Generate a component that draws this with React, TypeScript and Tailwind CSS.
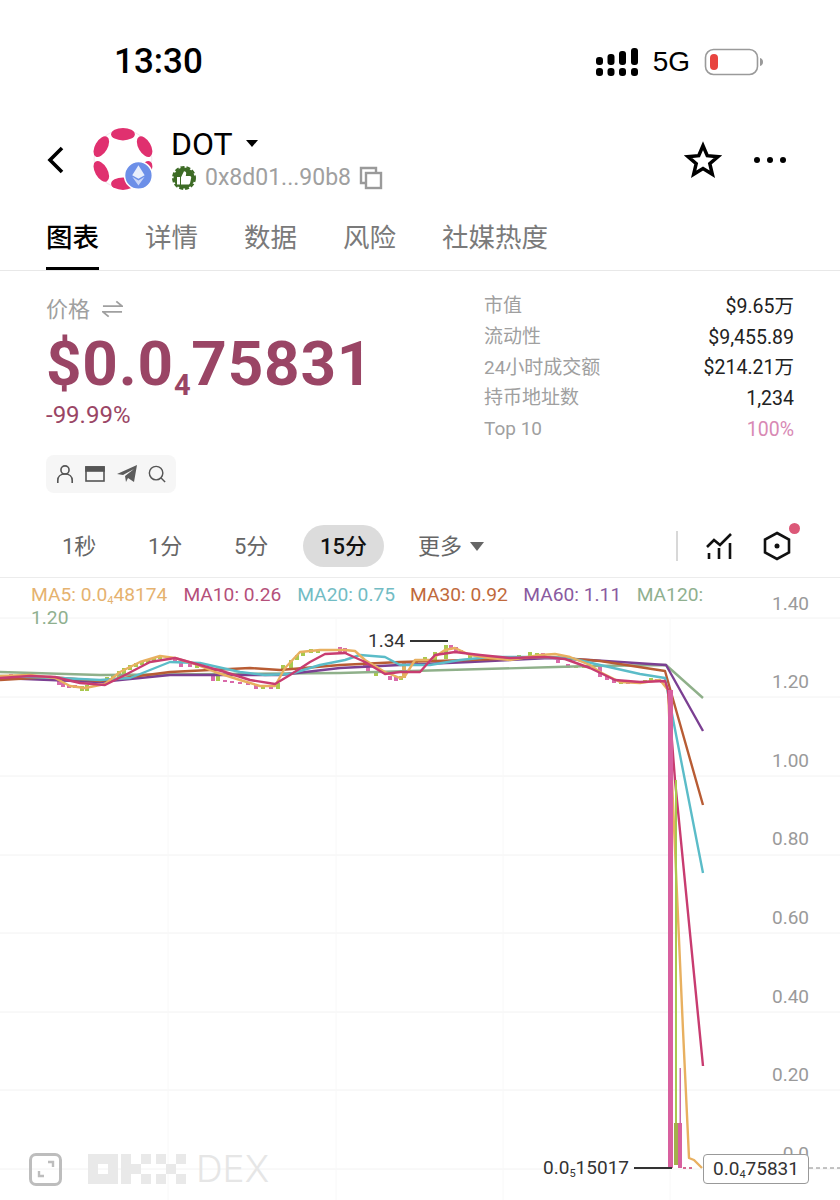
const cjk = "font-['Roboto','Noto_Sans_CJK_SC',sans-serif]";

const tabs = ["详情", "数据", "风险", "社媒热度"];

const stats = [
  { label: "市值", value: "$9.65万" },
  { label: "流动性", value: "$9,455.89" },
  { label: "24小时成交额", value: "$214.21万" },
  { label: "持币地址数", value: "1,234" },
  { label: "Top 10", value: "100%", pink: true },
];

const axis = [
  { label: "1.40", top: "top-[13px]" },
  { label: "1.20", top: "top-[91px]" },
  { label: "1.00", top: "top-[170px]" },
  { label: "0.80", top: "top-[248px]" },
  { label: "0.60", top: "top-[327px]" },
  { label: "0.40", top: "top-[406px]" },
  { label: "0.20", top: "top-[484px]" },
  { label: "0.0", top: "top-[563px]" },
];

const GREEN = "#a9c94f";
const PINK = "#d96aaa";

// x, y, height, colour
const candles: [number, number, number, string][] = [
  [3, 675, 4, PINK], [11, 674, 3, PINK], [59, 678, 7, PINK], [63, 681, 6, PINK], [69, 685, 3, PINK],
  [75, 685, 3, PINK], [82, 686, 5, GREEN], [87, 685, 6, GREEN], [107, 677, 6, GREEN], [113, 675, 6, GREEN],
  [119, 671, 7, GREEN], [124, 668, 7, GREEN], [130, 665, 5, GREEN], [136, 663, 4, GREEN], [142, 662, 3, GREEN],
  [148, 660, 3, GREEN], [154, 658, 3, GREEN], [160, 656, 3, GREEN], [175, 658, 5, PINK], [181, 661, 6, PINK],
  [190, 663, 4, PINK], [197, 665, 3, GREEN], [213, 675, 6, PINK], [218, 675, 6, GREEN], [225, 680, 2, PINK],
  [232, 681, 2, PINK], [240, 682, 2, PINK], [248, 683, 2, PINK], [256, 684, 5, PINK], [263, 686, 3, GREEN],
  [271, 686, 3, PINK], [278, 683, 6, GREEN], [283, 665, 6, GREEN], [291, 660, 8, GREEN], [297, 655, 5, GREEN],
  [303, 652, 4, GREEN], [311, 649, 4, GREEN], [318, 650, 3, GREEN], [340, 647, 5, PINK], [345, 648, 5, PINK],
  [365, 660, 7, PINK], [368, 665, 7, PINK], [376, 672, 4, GREEN], [390, 676, 4, PINK], [396, 677, 4, PINK],
  [401, 676, 4, GREEN], [404, 662, 16, "#e0b060"], [416, 660, 3, GREEN], [425, 657, 3, GREEN], [435, 652, 8, GREEN],
  [446, 645, 14, GREEN], [451, 645, 4, PINK], [456, 647, 4, PINK], [461, 650, 3, PINK], [470, 655, 3, GREEN],
  [480, 657, 3, GREEN], [495, 657, 2, GREEN], [519, 655, 3, GREEN], [530, 652, 4, GREEN], [537, 653, 3, GREEN],
  [543, 653, 3, PINK], [558, 660, 3, PINK], [568, 664, 4, PINK], [576, 666, 2, GREEN], [584, 666, 2, GREEN],
  [600, 666, 11, PINK], [607, 675, 5, PINK], [614, 680, 3, PINK], [621, 682, 2, GREEN], [628, 682, 2, PINK],
  [637, 682, 2, GREEN], [645, 680, 3, GREEN], [651, 678, 3, GREEN], [657, 679, 3, PINK], [662, 680, 3, PINK],
];

const lines = [
  { color: "#8fb08a", points: "0,672 100,675 340,673 556,667 590,666 666,665 703,698" },
  { color: "#7b3f92", points: "0,678 100,682 170,675 280,675 340,668 400,665 470,662 550,658 590,660 666,665 703,731" },
  { color: "#b85c34", points: "0,680 50,677 100,681 170,672 250,668 280,670 340,665 400,662 470,660 550,657 600,661 665,671 703,805" },
  { color: "#5bbcc8", points: "0,676 60,678 100,680 130,678 170,662 200,663 240,672 265,675 290,674 320,665 345,660 360,655 385,657 400,665 430,665 460,660 490,657 530,657 570,658 600,665 640,674 665,678 703,873" },
  { color: "#e8b060", points: "0,676 30,675 55,678 70,686 85,688 105,684 120,672 140,662 160,656 175,658 195,664 215,672 240,680 260,686 275,686 285,668 300,652 320,650 345,650 355,651 365,660 385,672 400,678 405,676 415,660 430,660 445,650 455,648 470,655 490,658 510,660 540,655 555,654 570,657 590,665 600,672 620,682 640,683 660,680 668,690 683,1030 689,1158 694,1160 702,1168" },
  { color: "#c83c70", points: "0,678 30,676 55,677 80,683 105,685 125,675 150,662 175,658 200,665 225,672 250,680 275,684 290,675 310,662 325,654 345,653 365,662 385,674 400,672 420,672 435,655 455,652 480,655 510,658 545,657 565,659 590,668 615,680 640,682 665,681 668,690 675,780 703,1066" },
];

function DotLogo() {
  return (
    <svg viewBox="0 0 64 64" className="h-[66px] w-[66px]">
      <circle cx="31" cy="31" r="28" fill="none" stroke="#f4e6ee" strokeWidth="1" />
      <ellipse cx="31" cy="7" rx="11.5" ry="6" fill="#e0306f" />
      <ellipse cx="31" cy="55" rx="11.5" ry="6" fill="#e0306f" />
      <ellipse cx="10" cy="19" rx="11" ry="6" fill="#e0306f" transform="rotate(-60 10 19)" />
      <ellipse cx="52" cy="19" rx="11" ry="6" fill="#e0306f" transform="rotate(60 52 19)" />
      <ellipse cx="10" cy="43" rx="11" ry="6" fill="#e0306f" transform="rotate(60 10 43)" />
      <ellipse cx="52" cy="43" rx="11" ry="6" fill="#e0306f" transform="rotate(-60 52 43)" />
      <circle cx="46" cy="47" r="13.5" fill="#6c8fe8" stroke="#ffffff" strokeWidth="1.5" />
      <path d="M46 37l-6 9.800 6 3.400 6-3.400z" fill="#e8eefc" />
      <path d="M40 48.300l6 8.500 6-8.500-6 3.500z" fill="#c9d6f8" />
    </svg>
  );
}

function ThumbBadge() {
  return (
    <svg viewBox="0 0 26 26" className="h-[26px] w-[26px]">
      <circle cx="13" cy="13" r="10.5" fill="#3d6b25" />
      <circle cx="13" cy="13" r="11" fill="none" stroke="#3d6b25" strokeWidth="2" strokeDasharray="4 2" />
      <rect x="6" y="12" width="3" height="7.5" fill="#ffffff" />
      <path d="M10 12.200l3-6c1.600 0 2.400 1 2.200 2.400l-.4 2.400h4c1 0 1.600.8 1.400 1.800l-1.100 5.200c-.2.9-.8 1.500-1.800 1.500H10z" fill="#ffffff" />
    </svg>
  );
}

function OkxLogo() {
  return (
    <svg viewBox="0 0 98 30" className="h-[30px] w-[98px]" fill="#e9e9e9">
      <path fillRule="evenodd" d="M0 0h30v30H0zM10 10v10h10V10z" />
      <rect x="33" y="0" width="10" height="30" />
      <rect x="43" y="10" width="10" height="10" />
      <rect x="53" y="0" width="10" height="10" />
      <rect x="53" y="20" width="10" height="10" />
      <rect x="68" y="0" width="10" height="10" />
      <rect x="88" y="0" width="10" height="10" />
      <rect x="78" y="10" width="10" height="10" />
      <rect x="68" y="20" width="10" height="10" />
      <rect x="88" y="20" width="10" height="10" />
    </svg>
  );
}

function Chart() {
  return (
    <div className={`relative h-[622px] w-full overflow-hidden ${cjk}`}>
      <svg viewBox="0 578 840 622" className="absolute inset-0 h-[622px] w-[840px]">
        {[618, 697, 776, 855, 933, 1012, 1090, 1169].map((y) => (
          <line key={y} x1="0" x2="840" y1={y} y2={y} stroke="#f2f2f2" strokeWidth="1" />
        ))}
        {[168, 336, 503, 670].map((x) => (
          <line key={x} x1={x} x2={x} y1="618" y2="1200" stroke="#f8f8f8" strokeWidth="1" />
        ))}
        {candles.map(([x, y, h, c], i) => (
          <rect key={i} x={x - 2} y={y} width="4" height={h} fill={c} />
        ))}
        {lines.map((l) => (
          <polyline key={l.color} points={l.points} fill="none" stroke={l.color} strokeWidth="2.4" strokeLinejoin="round" />
        ))}
        <rect x="668" y="690" width="5" height="478" fill="#d8609f" />
        <rect x="675" y="780" width="2" height="343" fill="#a9c94f" />
        <rect x="674" y="1123" width="4" height="42" fill="#a3b04a" />
        <rect x="679.5" y="1068" width="1.5" height="55" fill="#c76ab0" />
        <rect x="678" y="1123" width="4" height="45" fill="#d8609f" />
        <line x1="683" x2="695" y1="1168" y2="1168" stroke="#c83c70" strokeWidth="1.5" strokeDasharray="3 3" />
        <line x1="809" x2="840" y1="1168" y2="1168" stroke="#888888" strokeWidth="1" strokeDasharray="4 3" />
        <line x1="410" x2="448" y1="641" y2="641" stroke="#333333" strokeWidth="2" />
        <line x1="634" x2="672" y1="1168" y2="1168" stroke="#333333" strokeWidth="2" />
      </svg>

      {axis.map((a) => (
        <div key={a.label} className={`absolute right-[31px] ${a.top} text-[19px] leading-[26px] text-[#9a9a9a]`}>
          {a.label}
        </div>
      ))}

      <div className="absolute left-[31px] top-[5px] w-[676px] text-[19.2px] leading-[23px]">
        <span className="mr-[16px] text-[#e5b26f]">
          MA5: 0.0<span className="align-[-3px] text-[11px] leading-none">4</span>48174
        </span>
        <span className="mr-[16px] text-[#b5507a]">MA10: 0.26</span>
        <span className="mr-[15px] text-[#72bcc4]">MA20: 0.75</span>
        <span className="mr-[15.500px] text-[#c0693c]">MA30: 0.92</span>
        <span className="mr-[15.500px] text-[#8a5aa0]">MA60: 1.11</span>
        <span className="text-[#8fb08f]">MA120: 1.20</span>
      </div>

      <div className="absolute left-[368px] top-[50px] text-[19px] leading-[26px] text-[#333333]">1.34</div>
      <div className="absolute right-[211px] top-[577px] text-[19px] leading-[26px] text-[#333333]">
        0.0<span className="align-[-3px] text-[11px] leading-none">5</span>15017
      </div>
      <div className="absolute left-[703px] top-[576px] h-[30px] w-[106px] rounded-[4px] border border-[#999999] bg-white text-center text-[19px] leading-[28px] text-[#333333]">
        0.0<span className="align-[-3px] text-[11px] leading-none">4</span>75831
      </div>

      <div className="absolute left-[29px] top-[571px] flex items-center">
        <div className="flex h-[33px] w-[33px] items-center justify-center rounded-[7px] border-[3px] border-[#bdbdbd]">
          <svg viewBox="0 0 24 24" className="h-[24px] w-[24px]" fill="none" stroke="#bdbdbd" strokeWidth="2.4">
            <path d="M14 5h5v5M5 14v5h5" />
          </svg>
        </div>
        <div className="ml-[26px]">
          <OkxLogo />
        </div>
        <span className="ml-[10px] font-['Inter',sans-serif] text-[37px] font-light leading-[40px] text-[#e6e6e6]">DEX</span>
      </div>
    </div>
  );
}

export default function App() {
  return (
    <div className={`flex h-[1200px] w-[840px] flex-col overflow-hidden bg-white ${cjk}`}>
      {/* status bar */}
      <div className="flex h-[124px] items-center justify-between pl-[114px] pr-[76px]">
        <span className="text-[35px] font-medium text-black">13:30</span>
        <div className="flex items-center">
          <svg viewBox="0 0 42 30" className="h-[30px] w-[42px]" fill="#000000">
            <rect x="0" y="10" width="7" height="8" rx="3" />
            <rect x="0" y="21" width="7" height="8" rx="3" />
            <rect x="11.5" y="7" width="7" height="11" rx="3" />
            <rect x="11.5" y="21" width="7" height="8" rx="3" />
            <rect x="23" y="4" width="7" height="14" rx="3" />
            <rect x="23" y="21" width="7" height="8" rx="3" />
            <rect x="35" y="1" width="7" height="17" rx="3" />
            <rect x="35" y="21" width="7" height="8" rx="3" />
          </svg>
          <span className="ml-[15px] font-['Liberation_Sans',sans-serif] text-[28px] leading-none text-black">5G</span>
          <svg viewBox="0 0 60 28" className="ml-[14px] h-[28px] w-[60px]">
            <rect x="1.5" y="1.5" width="52" height="25" rx="8" fill="#ffffff" stroke="#9a9a9a" strokeWidth="1.6" />
            <rect x="6" y="6" width="8" height="16" rx="4" fill="#e8443f" />
            <path d="M56 10c2 .5 3 2 3 4s-1 3.500-3 4z" fill="#9a9a9a" />
          </svg>
        </div>
      </div>

      {/* header */}
      <div className="flex h-[72px] items-center justify-between pl-[46px] pr-[54px]">
        <div className="flex items-center">
          <svg viewBox="0 0 20 30" className="h-[30px] w-[20px]" fill="none" stroke="#000000" strokeWidth="3.6">
            <path d="M16 3L4 15l12 12" />
          </svg>
          <div className="ml-[25px]">
            <DotLogo />
          </div>
          <div className="ml-[14px] flex flex-col">
            <div className="flex h-[32px] items-center">
              <span className="text-[32px] leading-none text-black">DOT</span>
              <span className="ml-[13px] h-0 w-0 border-x-[6px] border-t-[7px] border-x-transparent border-t-black" />
            </div>
            <div className="mt-[3px] flex h-[30px] items-center">
              <ThumbBadge />
              <span className="ml-[8px] text-[23px] leading-none text-[#a0a0a0]">0x8d01...90b8</span>
              <svg viewBox="0 0 24 24" className="ml-[8px] h-[24px] w-[24px]" fill="none" stroke="#9a9a9a" strokeWidth="2.4">
                <path d="M6 17H2V2h15v4" />
                <rect x="7" y="7" width="15" height="15" />
              </svg>
            </div>
          </div>
        </div>
        <div className="flex items-center gap-[32px]">
          <svg viewBox="0 0 24 24" className="h-[38px] w-[38px]" fill="none" stroke="#000000" strokeWidth="2.2" strokeLinejoin="miter">
            <path d="M12 3l2.700 6.300 6.800.6-5.200 4.400 1.600 6.700-5.900-3.600-5.900 3.600 1.600-6.700-5.200-4.400 6.800-.6z" />
          </svg>
          <div className="flex gap-[7px]">
            <span className="h-[6px] w-[6px] rounded-full bg-black" />
            <span className="h-[6px] w-[6px] rounded-full bg-black" />
            <span className="h-[6px] w-[6px] rounded-full bg-black" />
          </div>
        </div>
      </div>

      {/* tabs */}
      <div className="flex h-[75px] items-start gap-[46px] border-b border-[#e8e8e8] pl-[46px] pt-[22px]">
        <div className="relative h-[52px] text-[26.500px] font-medium leading-[40px] text-black">
          图表
          <span className="absolute inset-x-0 bottom-0 h-[3px] bg-black" />
        </div>
        {tabs.map((t) => (
          <div key={t} className="text-[26.500px] leading-[40px] text-[#7a7a7a]">
            {t}
          </div>
        ))}
      </div>

      {/* price + stats */}
      <div className="flex h-[254px] justify-between pl-[46px] pr-[46px] pt-[20px]">
        <div className="flex flex-col">
          <div className="flex h-[36px] items-center text-[22px] text-[#a0a0a0]">
            价格
            <svg viewBox="0 0 22 18" className="ml-[12px] h-[18px] w-[21px]" fill="none" stroke="#a0a0a0" strokeWidth="2">
              <path d="M1 6h20L15 1M21 12H1l6 5" />
            </svg>
          </div>
          <div className="mt-[1px] h-[72px] text-[62px] font-bold leading-[72px] tracking-[0.8px] text-[#9a4565]">
            $0.0<span className="align-[-10px] text-[29px] leading-none">4</span>75831
          </div>
          <div className="text-[24px] leading-[30px] text-[#9a4565]">-99.99%</div>
          <div className="mt-[25px] flex h-[38px] w-[130px] items-center justify-between rounded-[8px] bg-[#f6f6f6] px-[10px]">
            <svg viewBox="0 0 20 22" className="h-[22px] w-[18px]" fill="none" stroke="#555555" strokeWidth="1.8">
              <circle cx="10" cy="6.500" r="4.500" />
              <path d="M2 21v-3c0-4 3-7 8-7s8 3 8 7v3" />
            </svg>
            <svg viewBox="0 0 20 16" className="h-[16px] w-[20px]" fill="none" stroke="#555555" strokeWidth="1.6">
              <rect x="1" y="1" width="18" height="14" />
              <rect x="1" y="1" width="18" height="4" fill="#555555" />
            </svg>
            <svg viewBox="0 0 20 18" className="h-[18px] w-[20px]" fill="#5c5c5c">
              <path d="M0 9L20 0l-3 17-6-4-2 4-1-6 9-7-11 6z" />
            </svg>
            <svg viewBox="0 0 20 20" className="h-[18px] w-[18px]" fill="none" stroke="#555555" strokeWidth="1.6">
              <circle cx="9" cy="9" r="7.500" />
              <path d="M14.500 14.500L19 19" />
            </svg>
          </div>
        </div>
        <div className="flex w-[310px] flex-col">
          {stats.map((s) => (
            <div key={s.label} className="flex h-[30.750px] items-center justify-between">
              <span className="text-[19px] text-[#a0a0a0]">{s.label}</span>
              <span className={s.pink ? "text-[19.500px] text-[#d889b4]" : "text-[19.500px] text-[#222222]"}>{s.value}</span>
            </div>
          ))}
        </div>
      </div>

      {/* timeframes */}
      <div className="flex h-[53px] items-start border-b border-[#ececec] pl-[46px] pr-[46px]">
        <div className="flex h-[42px] w-[86px] items-center pl-[16px] text-[22px] text-[#666666]">1秒</div>
        <div className="flex h-[42px] w-[86px] items-center pl-[16px] text-[22px] text-[#666666]">1分</div>
        <div className="flex h-[42px] w-[85px] items-center pl-[16px] text-[22px] text-[#666666]">5分</div>
        <div className="flex h-[42px] w-[81px] items-center justify-center rounded-full bg-[#dcdcdc] text-[22px] font-medium text-[#111111]">15分</div>
        <div className="ml-[34px] flex h-[42px] items-center text-[22px] text-[#666666]">
          更多
          <span className="ml-[8px] h-0 w-0 border-x-[7px] border-t-[9px] border-x-transparent border-t-[#666666]" />
        </div>
        <div className="ml-auto flex h-[42px] items-center">
          <span className="h-[30px] w-[2px] bg-[#d8d8d8]" />
          <svg viewBox="0 0 28 28" className="ml-[27px] h-[28px] w-[28px]" fill="none" stroke="#111111" strokeWidth="2.6">
            <path d="M2 15l7-7 6 5 11-11" />
            <path d="M4 27v-6M14 27V16M25 27V11" />
          </svg>
          <div className="relative ml-[30px] mr-[3px]">
            <svg viewBox="0 0 28 30" className="h-[30px] w-[28px]" fill="none" stroke="#111111" strokeWidth="2.6">
              <path d="M14 2l12 6.500v13L14 28 2 21.500v-13z" />
              <circle cx="14" cy="15" r="2.500" fill="#111111" stroke="none" />
            </svg>
            <span className="absolute -right-[9px] -top-[8px] h-[11px] w-[11px] rounded-full bg-[#dc5878]" />
          </div>
        </div>
      </div>

      <Chart />
    </div>
  );
}
